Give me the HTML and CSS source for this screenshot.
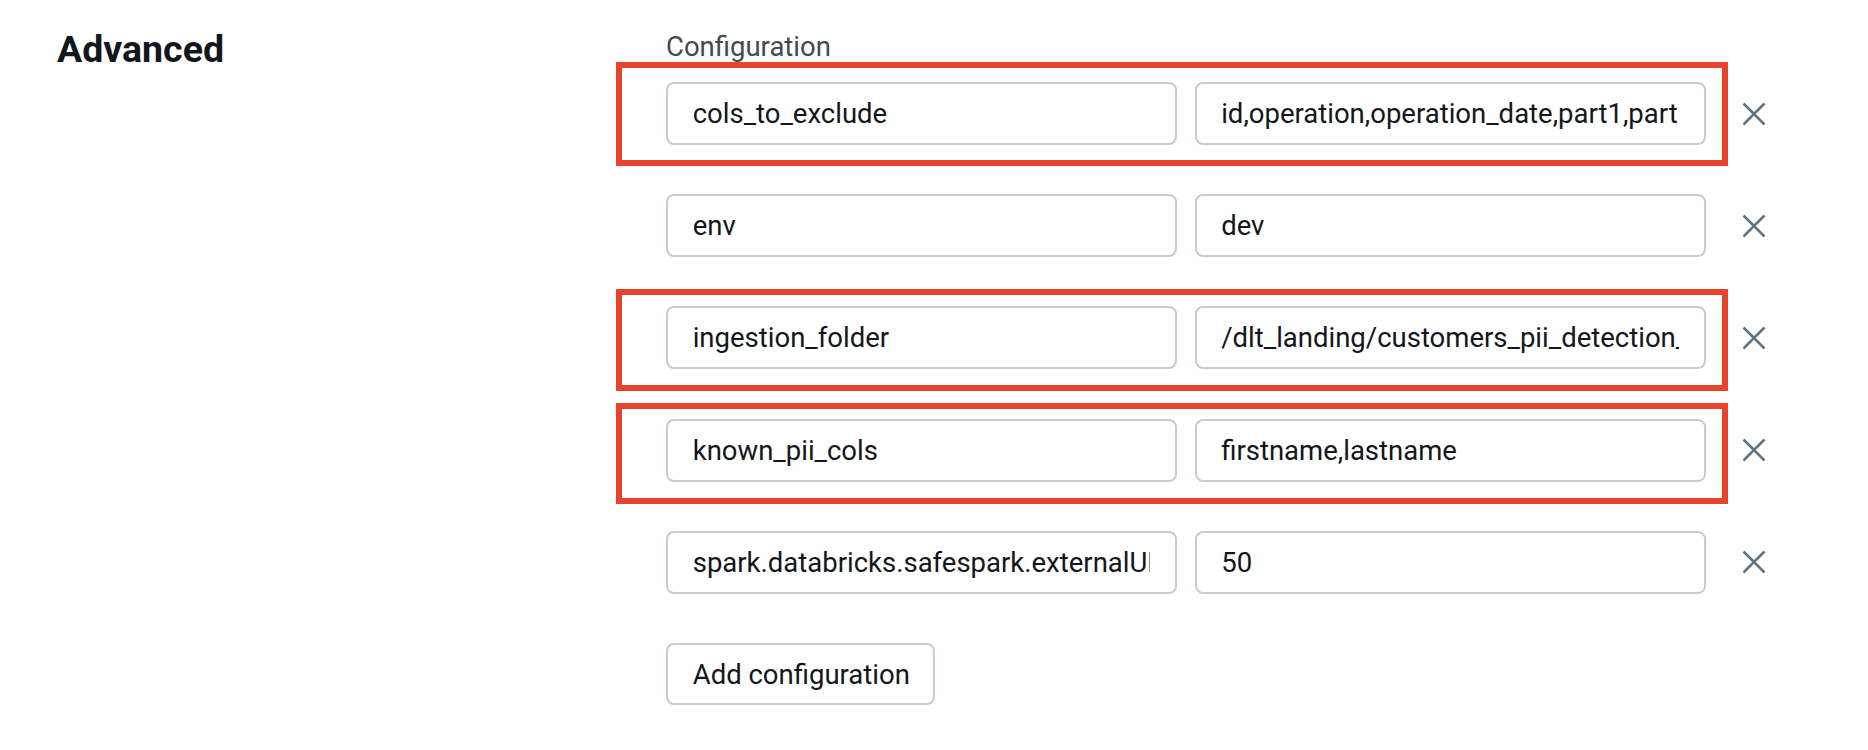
FILE: index.html
```html
<!DOCTYPE html>
<html lang="en">
<head>
<meta charset="utf-8">
<title>Advanced configuration</title>
<link rel="stylesheet" href="styles.css">
</head>
<body>
<div class="page">
  <h2 class="section-title">Advanced</h2>
  <div class="section-body">
    <div class="field-label">Configuration</div>
    <div class="rows">
      <div class="row">
        <div class="pair hl hl-a">
          <div class="field"><span class="field-text">cols_to_exclude</span></div>
          <div class="field"><span class="field-text">id,operation,operation_date,part1,part2</span></div>
        </div>
        <button class="remove" aria-label="Remove"><svg viewBox="0 0 24 24" width="24" height="24"><path d="M1.5 1.5 L22.5 22.5 M22.5 1.5 L1.5 22.5" /></svg></button>
      </div>
      <div class="row">
        <div class="pair">
          <div class="field"><span class="field-text">env</span></div>
          <div class="field"><span class="field-text">dev</span></div>
        </div>
        <button class="remove" aria-label="Remove"><svg viewBox="0 0 24 24" width="24" height="24"><path d="M1.5 1.5 L22.5 22.5 M22.5 1.5 L1.5 22.5" /></svg></button>
      </div>
      <div class="row">
        <div class="pair hl hl-b">
          <div class="field"><span class="field-text">ingestion_folder</span></div>
          <div class="field"><span class="field-text">/dlt_landing/customers_pii_detection_demo</span></div>
        </div>
        <button class="remove" aria-label="Remove"><svg viewBox="0 0 24 24" width="24" height="24"><path d="M1.5 1.5 L22.5 22.5 M22.5 1.5 L1.5 22.5" /></svg></button>
      </div>
      <div class="row">
        <div class="pair hl hl-c">
          <div class="field"><span class="field-text">known_pii_cols</span></div>
          <div class="field"><span class="field-text">firstname,lastname</span></div>
        </div>
        <button class="remove" aria-label="Remove"><svg viewBox="0 0 24 24" width="24" height="24"><path d="M1.5 1.5 L22.5 22.5 M22.5 1.5 L1.5 22.5" /></svg></button>
      </div>
      <div class="row">
        <div class="pair">
          <div class="field"><span class="field-text">spark.databricks.safespark.externalUDF.plan.limit</span></div>
          <div class="field"><span class="field-text">50</span></div>
        </div>
        <button class="remove" aria-label="Remove"><svg viewBox="0 0 24 24" width="24" height="24"><path d="M1.5 1.5 L22.5 22.5 M22.5 1.5 L1.5 22.5" /></svg></button>
      </div>
      <button class="add-btn">Add configuration</button>
    </div>
  </div>
</div>
</body>
</html>
```
FILE: styles.css
```css
html, body {
  margin: 0;
  padding: 0;
  background: #ffffff;
}

body {
  font-family: Roboto, "Liberation Sans", sans-serif;
  color: #11171c;
}

.page {
  display: grid;
  grid-template-columns: 609px 1fr;
  padding: 27px 0 0 57px;
}

.section-title {
  margin: 0;
  font-size: 37.5px;
  line-height: 44px;
  font-weight: 700;
  color: #11171c;
}

.section-body {
  display: flex;
  flex-direction: column;
}

.field-label {
  margin-top: 4px;
  margin-bottom: 19.3px;
  font-size: 27.5px;
  line-height: 32px;
  color: #444a50;
}

.rows {
  display: flex;
  flex-direction: column;
  gap: 49.1px;
}

.row {
  display: flex;
  align-items: center;
}

.pair {
  position: relative;
  display: flex;
  gap: 17.5px;
}

.hl::after {
  content: "";
  position: absolute;
  left: -50px;
  right: -22px;
  border: 6px solid #e8432c;
  pointer-events: none;
}

.hl-a::after {
  top: -20.5px;
  bottom: -20.5px;
}

.hl-b::after {
  top: -17.5px;
  bottom: -22px;
}

.hl-c::after {
  top: -15.5px;
  bottom: -22.5px;
}

.field {
  box-sizing: border-box;
  width: 511px;
  height: 63px;
  padding: 0 24.7px;
  border: 2px solid #c4cdd7;
  border-radius: 8px;
  background: #ffffff;
}

.field-text {
  display: block;
  overflow: hidden;
  white-space: nowrap;
  font-size: 27.5px;
  line-height: 59px;
  color: #11171c;
}

.remove {
  margin: 0 0 0 36px;
  padding: 0;
  width: 24px;
  height: 24px;
  border: 0;
  background: transparent;
  display: flex;
}

.remove svg path {
  fill: none;
  stroke: #5f7281;
  stroke-width: 2.5;
  stroke-linecap: butt;
}

.add-btn {
  align-self: flex-start;
  box-sizing: border-box;
  height: 62.5px;
  padding: 0 23.5px 0 24.7px;
  border: 2px solid #c4cdd7;
  border-radius: 8px;
  background: #ffffff;
  font-family: Roboto, "Liberation Sans", sans-serif;
  font-size: 27.5px;
  color: #11171c;
}
```
